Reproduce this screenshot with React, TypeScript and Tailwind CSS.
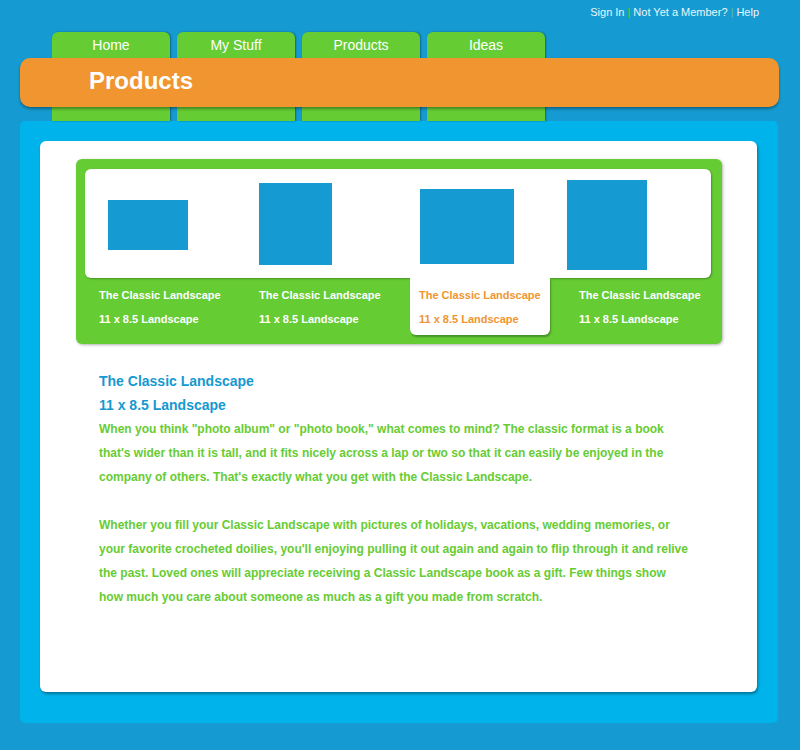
import React from "react";

const tabs = ["Home", "My Stuff", "Products", "Ideas"];

const items = [
  { w: 80, h: 50, ml: 18, mt: 2 },
  { w: 73, h: 82, ml: 9, mt: 0 },
  { w: 94, h: 75, ml: 10, mt: 6 },
  { w: 80, h: 90, ml: -3, mt: 2 },
];

export default function App() {
  return (
    <div
      className="w-[800px] h-[750px] bg-[#159bd2] overflow-hidden"
      style={{ fontFamily: '"Liberation Sans", Arial, sans-serif' }}
    >
      {/* top links */}
      <div className="h-[32px] flex justify-end items-start pt-[5px] pr-[41px] text-[11px] leading-[14px] text-[#eaf5fb]">
        <span>Sign In</span>
        <span className="text-[#66cc33] mx-[3px]">|</span>
        <span>Not Yet a Member?</span>
        <span className="text-[#66cc33] mx-[3px]">|</span>
        <span>Help</span>
      </div>

      {/* tabs + title bar */}
      <div className="relative h-[89px]">
        <div className="flex gap-[7px] ml-[52px] h-full">
          {tabs.map((t) => (
            <div
              key={t}
              className="w-[118px] shrink-0 h-full bg-[#66cc33] rounded-t-[6px] shadow-[1px_0_2px_rgba(0,0,0,0.35)] text-white text-[14px] leading-[16px] text-center pt-[5px]"
            >
              {t}
            </div>
          ))}
        </div>
        <div className="absolute left-[20px] top-[26px] w-[759px] h-[49px] bg-[#f0952f] rounded-[10px] shadow-[0_2px_3px_rgba(0,0,0,0.35)] flex items-center pl-[69px]">
          <span className="text-white font-bold text-[24px] leading-[28px] mt-[-3px]">Products</span>
        </div>
      </div>

      {/* blue panel */}
      <div className="ml-[20px] w-[758px] h-[602px] bg-[#00b3ea] rounded-[5px] pt-[20px] pl-[20px]">
        <div className="w-[717px] h-[551px] bg-white rounded-[6px] shadow-[1px_2px_3px_rgba(0,0,0,0.35)] pt-[18px] pl-[36px]">
          {/* product selector */}
          <div className="w-[646px] h-[185px] bg-[#66cc33] rounded-[6px] shadow-[1px_1px_3px_rgba(0,0,0,0.3)] pt-[10px] pl-[9px]">
            <div className="relative w-[626px] h-[109px] bg-white rounded-[6px] shadow-[1px_1px_2px_rgba(0,0,0,0.3)] flex items-center pl-[5px]">
              {items.map((it, i) => (
                <div key={i} className="w-[160px] shrink-0 flex items-center">
                  <div
                    className="bg-[#159bd2] shrink-0"
                    style={{ width: it.w, height: it.h, marginLeft: it.ml, marginTop: it.mt }}
                  />
                </div>
              ))}
            </div>
            <div className="flex pl-[5px] text-[11px] leading-[24px] font-bold">
              {items.map((_, i) => {
                const sel = i === 2;
                return (
                  <div key={i} className="w-[160px] shrink-0">
                    <div
                      className={
                        sel
                          ? "relative z-10 w-[140px] h-[57px] bg-white rounded-b-[6px] shadow-[1px_2px_2px_rgba(0,0,0,0.3)] pl-[9px] pt-[5px] text-[#f0952f]"
                          : "w-[140px] pl-[9px] pt-[5px] text-white"
                      }
                    >
                      <div className="whitespace-nowrap">The Classic Landscape</div>
                      <div className="whitespace-nowrap">11 x 8.5 Landscape</div>
                    </div>
                  </div>
                );
              })}
            </div>
          </div>

          {/* description */}
          <div className="mt-[25px] pl-[23px] font-bold">
            <div className="text-[14px] leading-[24px] text-[#1599d1]">The Classic Landscape</div>
            <div className="text-[14px] leading-[24px] text-[#1599d1]">11 x 8.5 Landscape</div>
            <p className="w-[591px] text-[12px] leading-[24px] text-[#66cc33]">
              When you think "photo album" or "photo book," what comes to mind? The classic format is a book that's wider than it is tall, and it fits nicely across a lap or two so that it can easily be enjoyed in the company of others. That's exactly what you get with the Classic Landscape.
            </p>
            <p className="w-[591px] mt-[24px] text-[12px] leading-[24px] text-[#66cc33]">
              Whether you fill your Classic Landscape with pictures of holidays, vacations, wedding memories, or your favorite crocheted doilies, you'll enjoying pulling it out again and again to flip through it and relive the past. Loved ones will appreciate receiving a Classic Landscape book as a gift. Few things show how much you care about someone as much as a gift you made from scratch.
            </p>
          </div>
        </div>
      </div>
    </div>
  );
}
